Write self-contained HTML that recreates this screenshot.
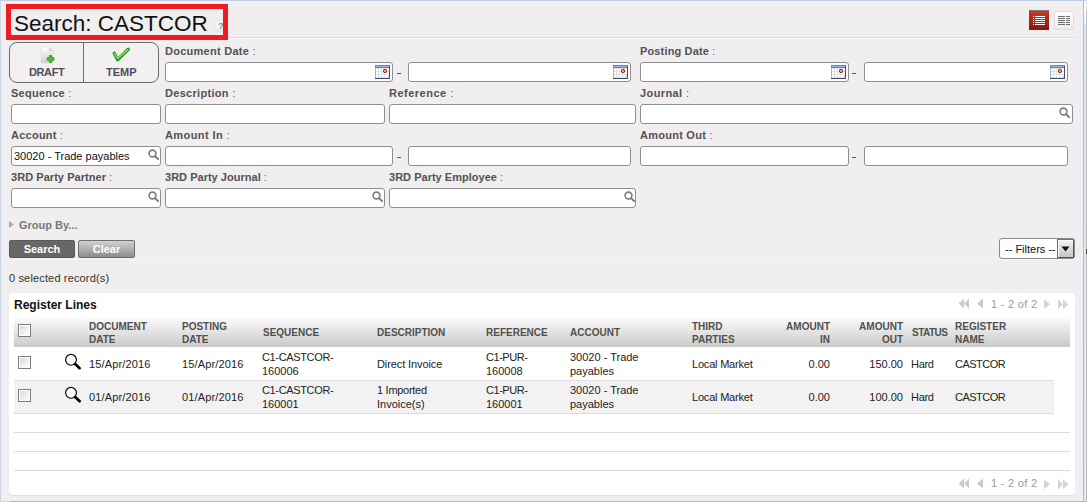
<!DOCTYPE html>
<html><head><meta charset="utf-8">
<style>
*{box-sizing:border-box;margin:0;padding:0}
html,body{width:1087px;height:502px;overflow:hidden}
body{position:relative;background:#f0eeee;font-family:"Liberation Sans",sans-serif;color:#333}
.a{position:absolute}
.lbl{position:absolute;font-size:11px;font-weight:bold;color:#525252;line-height:13px;white-space:nowrap;letter-spacing:0.28px}
.lbl i{font-style:normal;font-weight:normal;color:#6a5a7a}
.inp{position:absolute;height:20px;background:#fff;border:1px solid #8f8f8f;border-radius:3px}
.dash{position:absolute;width:4px;height:1px;background:#555}
.cal{position:absolute;width:15px;height:14px}
.mag{position:absolute;width:11px;height:11px}
.th{position:absolute;font-size:10px;font-weight:bold;color:#505050;line-height:13px;white-space:nowrap}
.td{position:absolute;font-size:11px;color:#222;line-height:13px;white-space:nowrap}
.r{text-align:right}
.pt{position:absolute;font-size:11px;line-height:14px;color:#9a9a9a;white-space:nowrap;letter-spacing:0.3px}
.cb{position:absolute;width:13px;height:13px;border:1px solid #7c7c7c;background:linear-gradient(135deg,#d0d4dc,#f6f6f6 70%,#fafafa);box-shadow:inset 0 0 0 1px #fff}
</style></head><body>
<svg width="0" height="0" style="position:absolute">
<defs>
<symbol id="cal" viewBox="0 0 15 14">
 <rect width="15" height="14" fill="#e2e0dc"/>
 <rect x="0" y="0" width="15" height="3" fill="#5586e2"/>
 <rect x="1" y="1" width="13" height="1" fill="#93b5f4"/>
 <g fill="#fff"><rect x="1" y="4" width="2" height="2"/><rect x="4" y="4" width="2" height="2"/><rect x="7" y="4" width="2" height="2"/><rect x="10" y="4" width="2" height="2"/><rect x="12" y="4" width="2" height="2"/>
 <rect x="1" y="7" width="2" height="2"/><rect x="4" y="7" width="2" height="2"/><rect x="7" y="7" width="2" height="2"/><rect x="10" y="7" width="2" height="2"/><rect x="12" y="7" width="2" height="2"/>
 <rect x="1" y="10" width="2" height="2"/><rect x="4" y="10" width="2" height="2"/><rect x="7" y="10" width="2" height="2"/><rect x="10" y="10" width="2" height="2"/></g>
 <rect x="0" y="3" width="1" height="11" fill="#a4b6d8"/>
 <rect x="14" y="1" width="1" height="13" fill="#3c4d70"/>
 <rect x="0" y="13" width="15" height="1" fill="#3c4d70"/>
 <circle cx="10" cy="6" r="1.5" fill="none" stroke="#a40000" stroke-width="1.05"/>
</symbol>
<symbol id="mag" viewBox="0 0 12 12">
 <circle cx="4.5" cy="4.5" r="3.4" fill="none" stroke="#7c7c7c" stroke-width="1.6"/>
 <path d="M7 7L10 10" stroke="#7c7c7c" stroke-width="2" stroke-linecap="round"/>
</symbol>
<symbol id="rmag" viewBox="0 0 18 18">
 <circle cx="7" cy="6.8" r="5.4" fill="#fcfcfc" stroke="#000" stroke-width="1.15"/>
 <path d="M11.2 11L15.6 15.3" stroke="#000" stroke-width="2.7" stroke-linecap="round"/>
</symbol>
<symbol id="pgr" viewBox="0 0 120 12">
 <g fill="#cbcbcb">
 <path d="M1.5 5.5L7 0.5V10.5z"/><path d="M7 5.5L12 0.5V10.5z"/>
 <path d="M20 5.5L26 0.5V10.5z"/>
 </g><g fill="#d5d5d5">
 <path d="M87 1.2L93 6.2L87 11.2z"/>
 <path d="M101 1.2L106 6.2L101 11.2z"/><path d="M106 1.2L111.5 6.2L106 11.2z"/>
 </g>
</symbol>
</defs></svg>
<!-- frame -->
<div class="a" style="left:0;top:0;width:1087px;height:1px;background:#c0cde0"></div>
<div class="a" style="left:1px;top:1px;width:1082px;height:1px;background:#f3f1ef"></div>
<div class="a" style="left:0;top:0;width:1px;height:502px;background:#ccd7e6"></div>
<div class="a" style="left:0;top:501px;width:1087px;height:1px;background:linear-gradient(90deg,#d0dbea 0,#d0dbea 10px,#a9b6cc 10px,#a9b6cc 100%)"></div>
<div class="a" style="left:1083px;top:1px;width:1px;height:500px;background:#bcbcbc"></div>
<div class="a" style="left:1084px;top:1px;width:2px;height:500px;background:linear-gradient(#fdfdfd 0,#fafafa 21px,#e6e6e6 23px,#e8e8e8 100%)"></div>
<div class="a" style="left:1086px;top:0;width:1px;height:502px;background:linear-gradient(#e4e8ee 0,#e4e8ee 9px,#b2c0d6 10px,#b2c0d6 100%)"></div>
<div class="a" style="left:1086px;top:249px;width:1px;height:5px;background:#4a4a4a"></div>

<!-- title -->
<div class="a" style="left:6px;top:37px;width:1069px;height:1px;background:#dcdcdc"></div>
<div class="a" style="left:6px;top:38px;width:1069px;height:1px;background:#f7f6f6"></div>
<div class="a" style="left:6px;top:4px;width:222px;height:36px;border:5px solid #ec1c24;background:#f0eeee"></div>
<div class="a" style="left:14px;top:11px;font-size:22.5px;line-height:26px;color:#111;white-space:nowrap">Search: CASTCOR</div>
<div class="a" style="left:213px;top:20px;width:12px;height:12px;border-radius:50%;background:radial-gradient(circle at 55% 35%,#fbfbfb,#dedede);box-shadow:0 0 1px #c8c8c8"></div>
<div class="a" style="left:218px;top:20px;font-size:9.5px;line-height:12px;color:#8a8a8a;font-weight:bold">?</div>
<div class="a" style="left:223px;top:4px;width:5px;height:36px;background:#ec1c24"></div>

<!-- view switch -->
<div class="a" style="left:1029px;top:10px;width:20px;height:20px;background:linear-gradient(#c9382c,#86170f);border-top:1px solid #777;"></div>
<svg class="a" style="left:1029px;top:10px" width="20" height="20"><g fill="#fff"><rect x="4" y="6" width="1" height="1"/><rect x="6" y="6" width="10" height="1"/><rect x="4" y="8" width="1" height="1"/><rect x="6" y="8" width="10" height="1"/><rect x="4" y="10" width="1" height="1"/><rect x="6" y="10" width="10" height="1"/><rect x="4" y="12" width="1" height="1"/><rect x="6" y="12" width="10" height="1"/><rect x="4" y="14" width="1" height="1"/><rect x="6" y="14" width="10" height="1"/></g></svg>
<div class="a" style="left:1054px;top:11px;width:20px;height:19px;background:linear-gradient(#fdfdfd,#ececec);border:1px solid #dedede;border-radius:2px"></div>
<svg class="a" style="left:1054px;top:11px" width="20" height="20"><g fill="#6d6d6d"><rect x="4" y="5" width="7" height="1"/><rect x="12" y="5" width="4" height="1"/><rect x="4" y="7" width="7" height="1"/><rect x="12" y="7" width="4" height="1"/><rect x="4" y="9" width="7" height="1"/><rect x="12" y="9" width="4" height="1"/><rect x="4" y="11" width="7" height="1"/><rect x="12" y="11" width="4" height="1"/><rect x="4" y="13" width="7" height="1"/><rect x="12" y="13" width="4" height="1"/></g></svg>

<!-- draft/temp -->
<div class="a" style="left:9px;top:42px;width:150px;height:41px;border:1px solid #6a6a6a;border-radius:8px;background:#f2f0f0"></div>
<div class="a" style="left:83px;top:43px;width:1px;height:39px;background:#6a6a6a"></div>
<svg class="a" style="left:38px;top:45px" width="20" height="20">
 <defs><linearGradient id="pg" x1="0" y1="0" x2="0" y2="1"><stop offset="0" stop-color="#fdfdfd"/><stop offset="1" stop-color="#cdcdcd"/></linearGradient>
 <linearGradient id="gk" x1="0" y1="0" x2="1" y2="1"><stop offset="0" stop-color="#a6ec70"/><stop offset="1" stop-color="#46b82a"/></linearGradient></defs>
 <path d="M3 2h8l4 4v12H3z" fill="url(#pg)" stroke="#dedede" stroke-width="0.6"/>
 <path d="M11 2v4h4" fill="#d2d2d2"/>
 <path d="M11.4 10.6h2.4v2.2h2.2v2.4h-2.2v2.2h-2.4v-2.2H9.2v-2.4h2.2z" fill="#4cc22a" stroke="#33a51c" stroke-width="1" stroke-linejoin="round"/>
</svg>
<svg class="a" style="left:110px;top:46px" width="22" height="18">
 <path d="M4.3 7.3L7.6 13.8L18.3 3.3" fill="none" stroke="#2a9a2c" stroke-width="3.4" stroke-linecap="round" stroke-linejoin="round"/><path d="M4.6 7.6L7.7 12.6L18 3.6" fill="none" stroke="#8fe05e" stroke-width="1.3" stroke-linecap="round" stroke-linejoin="round"/>
</svg>
<div class="lbl" style="left:29px;top:66px;color:#4d4d5a;letter-spacing:-0.4px">DRAFT</div>
<div class="lbl" style="left:106px;top:66px;color:#4d4d5a;letter-spacing:0px">TEMP</div>

<!-- row 1 -->
<div class="lbl" style="left:165px;top:45px;letter-spacing:0.26px">Document Date <i>:</i></div>
<div class="lbl" style="left:640px;top:45px;letter-spacing:0.15px">Posting Date <i>:</i></div>
<div class="inp" style="left:165px;top:62px;width:228px"></div>
<div class="dash" style="left:397px;top:73px"></div>
<div class="inp" style="left:408px;top:62px;width:223px"></div>
<div class="inp" style="left:640px;top:62px;width:209px"></div>
<div class="dash" style="left:852px;top:73px"></div>
<div class="inp" style="left:864px;top:62px;width:204px"></div>

<!-- row 2 -->
<div class="lbl" style="left:11px;top:87px;letter-spacing:0.25px">Sequence <i>:</i></div>
<div class="lbl" style="left:165px;top:87px;letter-spacing:0.3px">Description <i>:</i></div>
<div class="lbl" style="left:389px;top:87px;letter-spacing:0.5px">Reference <i>:</i></div>
<div class="lbl" style="left:640px;top:87px;letter-spacing:0.4px">Journal <i>:</i></div>
<div class="inp" style="left:11px;top:104px;width:150px"></div>
<div class="inp" style="left:165px;top:104px;width:220px"></div>
<div class="inp" style="left:389px;top:104px;width:247px"></div>
<div class="inp" style="left:640px;top:104px;width:433px"></div>

<!-- row 3 -->
<div class="lbl" style="left:11px;top:129px;letter-spacing:0.25px">Account <i>:</i></div>
<div class="lbl" style="left:165px;top:129px;letter-spacing:0.42px">Amount In <i>:</i></div>
<div class="lbl" style="left:640px;top:129px;letter-spacing:0.25px">Amount Out <i>:</i></div>
<div class="inp" style="left:11px;top:146px;width:150px"></div>
<div class="td" style="left:14px;top:150px;color:#111">30020 - Trade payables</div>
<div class="inp" style="left:165px;top:146px;width:228px"></div>
<div class="dash" style="left:397px;top:157px"></div>
<div class="inp" style="left:408px;top:146px;width:223px"></div>
<div class="inp" style="left:640px;top:146px;width:209px"></div>
<div class="dash" style="left:852px;top:157px"></div>
<div class="inp" style="left:864px;top:146px;width:204px"></div>

<!-- row 4 -->
<div class="lbl" style="left:11px;top:171px;letter-spacing:0.05px">3RD Party Partner <i>:</i></div>
<div class="lbl" style="left:165px;top:171px;letter-spacing:0.02px">3RD Party Journal <i>:</i></div>
<div class="lbl" style="left:389px;top:171px;letter-spacing:0.02px">3RD Party Employee <i>:</i></div>
<div class="inp" style="left:11px;top:188px;width:150px"></div>
<div class="inp" style="left:165px;top:188px;width:220px"></div>
<div class="inp" style="left:389px;top:188px;width:247px"></div>

<!-- icons placeholder -->
<svg class="a" style="left:375px;top:65px" width="15" height="14"><use href="#cal"/></svg>
<svg class="a" style="left:613px;top:65px" width="15" height="14"><use href="#cal"/></svg>
<svg class="a" style="left:831px;top:65px" width="15" height="14"><use href="#cal"/></svg>
<svg class="a" style="left:1050px;top:65px" width="15" height="14"><use href="#cal"/></svg>
<svg class="a" style="left:148px;top:149px" width="12" height="12"><use href="#mag"/></svg>
<svg class="a" style="left:148px;top:191px" width="12" height="12"><use href="#mag"/></svg>
<svg class="a" style="left:372px;top:191px" width="12" height="12"><use href="#mag"/></svg>
<svg class="a" style="left:624px;top:191px" width="12" height="12"><use href="#mag"/></svg>
<svg class="a" style="left:1059px;top:107px" width="12" height="12"><use href="#mag"/></svg>


<!-- group by / buttons -->
<div class="a" style="left:1px;top:259px;width:1082px;height:1px;background:#f5f3f3"></div>
<svg class="a" style="left:9px;top:221px" width="6" height="7"><path d="M0 0L5 3.5L0 7z" fill="#a8a8a8"/></svg>
<div class="lbl" style="left:19px;top:219px;color:#777;letter-spacing:0">Group By...</div>
<div class="a" style="left:9px;top:240px;width:66px;height:18px;background:#676767;border:1px solid #5a5a5a;border-radius:2px;color:#fff;font-size:11px;font-weight:bold;text-align:center;line-height:16px">Search</div>
<div class="a" style="left:78px;top:240px;width:57px;height:18px;background:linear-gradient(#d2d2d2,#8c8c8c);border:1px solid #6e6e6e;border-radius:2px;color:#fff;font-size:11px;font-weight:bold;text-align:center;line-height:16px">Clear</div>
<div class="a" style="left:999px;top:238px;width:76px;height:21px;background:#fff;border:1px solid #8a8a8a;border-radius:3px"></div>
<div class="a" style="left:1005px;top:242px;font-size:11px;line-height:14px;color:#111">-- Filters --</div>
<div class="a" style="left:1057px;top:239px;width:17px;height:19px;background:linear-gradient(#f2f2f2,#c6c6c6);border-left:1px solid #6a6a6a;border-top:1px solid #777;border-right:1px solid #555;border-bottom:1px solid #555;box-shadow:inset 1px 1px 0 #fff"></div>
<svg class="a" style="left:1061px;top:246px" width="9" height="6"><path d="M0.5 0.5h8L4.5 5.5z" fill="#111"/></svg>
<div class="td" style="left:9px;top:272px;color:#333;letter-spacing:0.15px">0 selected record(s)</div>

<!-- list panel -->
<div class="a" style="left:9px;top:293px;width:1066px;height:202px;background:#fff;border-radius:4px;box-shadow:0 1px 0 #e2e2e2"></div>
<div class="a" style="left:14px;top:298px;font-size:12px;font-weight:bold;line-height:15px;color:#111">Register Lines</div>
<svg class="a" style="left:957px;top:298px" width="120" height="12"><use href="#pgr"/></svg>
<div class="pt" style="left:991px;top:297px">1 - 2 of 2</div>


<!-- header -->
<div class="a" style="left:14px;top:318px;width:1056px;height:29px;background:linear-gradient(#fbfbfb,#c9c9c9)"></div>
<div class="cb" style="left:18px;top:324px"></div>
<div class="th" style="left:89px;top:320px">DOCUMENT<br>DATE</div>
<div class="th" style="left:182px;top:320px">POSTING<br>DATE</div>
<div class="th" style="left:263px;top:326px">SEQUENCE</div>
<div class="th" style="left:377px;top:326px">DESCRIPTION</div>
<div class="th" style="left:486px;top:326px">REFERENCE</div>
<div class="th" style="left:570px;top:326px">ACCOUNT</div>
<div class="th" style="left:692px;top:320px">THIRD<br>PARTIES</div>
<div class="th r" style="left:770px;width:60px;top:320px">AMOUNT<br>IN</div>
<div class="th r" style="left:843px;width:60px;top:320px">AMOUNT<br>OUT</div>
<div class="th" style="left:912px;top:326px;letter-spacing:-0.5px">STATUS</div>
<div class="th" style="left:955px;top:320px">REGISTER<br>NAME</div>

<!-- rows -->
<div class="a" style="left:14px;top:380px;width:1040px;height:1px;background:#e0e0e0"></div>
<div class="a" style="left:14px;top:381px;width:1040px;height:32px;background:#f2f2f2"></div>
<div class="a" style="left:14px;top:413px;width:1040px;height:1px;background:#dcdcdc"></div>
<div class="a" style="left:14px;top:432px;width:1056px;height:1px;background:#dcdcdc"></div>
<div class="a" style="left:14px;top:451px;width:1056px;height:1px;background:#dcdcdc"></div>
<div class="a" style="left:14px;top:470px;width:1056px;height:1px;background:#dcdcdc"></div>

<div class="cb" style="left:18px;top:356px"></div>
<div class="cb" style="left:18px;top:389px"></div>
<svg class="a" style="left:64px;top:353px" width="18" height="18"><use href="#rmag"/></svg>
<svg class="a" style="left:64px;top:386px" width="18" height="18"><use href="#rmag"/></svg>

<div class="td" style="left:89px;top:358px;letter-spacing:0.15px">15/Apr/2016</div>
<div class="td" style="left:182px;top:358px;letter-spacing:0.15px">15/Apr/2016</div>
<div class="td" style="left:262px;top:350px;line-height:14px"><span style="letter-spacing:-0.35px">C1-CASTCOR-</span><br>160006</div>
<div class="td" style="left:377px;top:358px;letter-spacing:-0.1px">Direct Invoice</div>
<div class="td" style="left:486px;top:350px;line-height:14px"><span style="letter-spacing:-0.45px">C1-PUR-</span><br>160008</div>
<div class="td" style="left:570px;top:350px;line-height:14px">30020 - Trade<br>payables</div>
<div class="td" style="left:692px;top:358px;letter-spacing:-0.2px">Local Market</div>
<div class="td r" style="left:770px;width:60px;top:358px">0.00</div>
<div class="td r" style="left:843px;width:60px;top:358px">150.00</div>
<div class="td" style="left:911px;top:358px;letter-spacing:-0.3px">Hard</div>
<div class="td" style="left:955px;top:358px;letter-spacing:-0.5px">CASTCOR</div>

<div class="td" style="left:89px;top:391px;letter-spacing:0.15px">01/Apr/2016</div>
<div class="td" style="left:182px;top:391px;letter-spacing:0.15px">01/Apr/2016</div>
<div class="td" style="left:262px;top:383px;line-height:14px"><span style="letter-spacing:-0.35px">C1-CASTCOR-</span><br>160001</div>
<div class="td" style="left:377px;top:383px;line-height:14px"><span style="letter-spacing:-0.28px">1 Imported</span><br>Invoice(s)</div>
<div class="td" style="left:486px;top:383px;line-height:14px"><span style="letter-spacing:-0.45px">C1-PUR-</span><br>160001</div>
<div class="td" style="left:570px;top:383px;line-height:14px">30020 - Trade<br>payables</div>
<div class="td" style="left:692px;top:391px;letter-spacing:-0.2px">Local Market</div>
<div class="td r" style="left:770px;width:60px;top:391px">0.00</div>
<div class="td r" style="left:843px;width:60px;top:391px">100.00</div>
<div class="td" style="left:911px;top:391px;letter-spacing:-0.3px">Hard</div>
<div class="td" style="left:955px;top:391px;letter-spacing:-0.5px">CASTCOR</div>
<svg class="a" style="left:957px;top:478px" width="120" height="12"><use href="#pgr"/></svg>
<div class="pt" style="left:991px;top:476px">1 - 2 of 2</div>

</body></html>
